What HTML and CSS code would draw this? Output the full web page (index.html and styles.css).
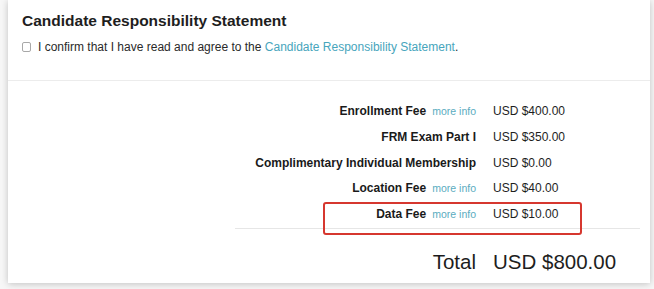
FILE: index.html
```html
<!DOCTYPE html>
<html>
<head>
<meta charset="utf-8">
<link rel="stylesheet" href="styles.css">
</head>
<body>
<div class="card">
  <section class="statement">
    <h2 class="title">Candidate Responsibility Statement</h2>
    <label class="confirm">
      <span class="box"></span>
      <span>I confirm that I have read and agree to the <a class="link">Candidate Responsibility Statement</a>.</span>
    </label>
  </section>
  <section class="fees">
    <div class="grid">
      <div class="label"><b>Enrollment Fee</b><a class="more">more info</a></div>
      <div class="value">USD $400.00</div>
      <div class="label"><b>FRM Exam Part I</b></div>
      <div class="value">USD $350.00</div>
      <div class="label"><b>Complimentary Individual Membership</b></div>
      <div class="value">USD $0.00</div>
      <div class="label"><b>Location Fee</b><a class="more">more info</a></div>
      <div class="value">USD $40.00</div>
      <div class="label"><b>Data Fee</b><a class="more">more info</a></div>
      <div class="value">USD $10.00</div>
    </div>
    <div class="divider"></div>
    <div class="grid total">
      <div class="label">Total</div>
      <div class="value">USD $800.00</div>
    </div>
    <div class="highlight"></div>
  </section>
</div>
</body>
</html>
```
FILE: styles.css
```css
* { box-sizing: border-box; }
html, body { margin: 0; padding: 0; background: #f7f7f7; }
body {
  font-family: "Liberation Sans", Arial, sans-serif;
  color: #1c1c1c;
  width: 654px;
  height: 289px;
  overflow: hidden;
}
.card {
  position: relative;
  margin-left: 8px;
  width: 642px;
  height: 283px;
  background: #fff;
  box-shadow: 0 1px 7px rgba(0,0,0,0.22);
}
.statement {
  padding: 11px 12px 0 14px;
  height: 81px;
  border-bottom: 1px solid #ececec;
}
.title {
  margin: 0;
  font-size: 15.5px;
  line-height: 20px;
  font-weight: bold;
  color: #1e1e1e;
}
.confirm {
  display: flex;
  align-items: center;
  margin-top: 9px;
  font-size: 12px;
  line-height: 14px;
  color: #2a2a2a;
}
.box {
  display: inline-block;
  width: 9px;
  height: 10px;
  border: 1px solid #a8a8a8;
  border-radius: 2px;
  margin-right: 7px;
}
.link { color: #47a5bc; }
.fees {
  padding-top: 18px;
}
.grid {
  display: grid;
  grid-template-columns: 468px 1fr;
  column-gap: 17px;
  font-size: 12px;
  line-height: 25.75px;
}
.label {
  text-align: right;
}
.label b { font-weight: bold; color: #1a1a1a; }
.more { color: #5aacc0; font-size: 10.5px; margin-left: 6px; }
.value { color: #1e1e1e; }
.divider {
  height: 1px;
  background: #e6e6e6;
  margin: 0 10px 0 227px;
}
.total {
  margin-top: 18px;
  font-size: 20.5px;
  line-height: 30px;
}
.highlight {
  position: absolute;
  left: 315px;
  top: 202px;
  width: 259px;
  height: 33px;
  border: 2px solid #d6372f;
  border-radius: 3px;
}
```
